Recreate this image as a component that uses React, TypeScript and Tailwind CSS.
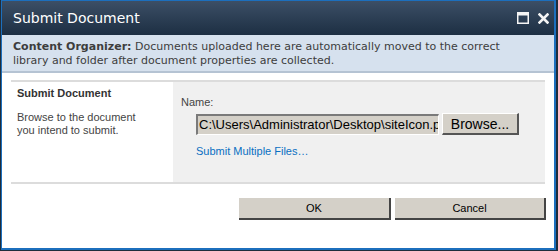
export default function App() {
  const tahoma = { fontFamily: '"Liberation Sans", Arial, sans-serif' }

  return (
    <div className="w-[558px] h-[251px] bg-[#1f2d3b] pl-px pr-[2px] pb-px">
      <div className="flex h-full flex-col border-l border-t border-r-2 border-b-2 border-[#1c6fbd] bg-white">
        {/* title bar */}
        <div className="flex h-[34px] items-center justify-between bg-gradient-to-b from-[#3c4f66] to-[#1d2f43] pl-[11px] pr-[5px]">
          <span className="pt-[1px] text-[14px] text-white" style={{ fontFamily: '"DejaVu Sans", Verdana, sans-serif' }}>
            Submit Document
          </span>
          <div className="flex items-center gap-[9px]">
            <svg width="12" height="12" viewBox="0 0 12 12">
              <rect x="0.75" y="0.75" width="10.5" height="10.5" fill="none" stroke="#f4f4f4" strokeWidth="1.5" />
              <rect x="1" y="1" width="10" height="2.5" fill="#f4f4f4" />
            </svg>
            <svg width="11" height="11" viewBox="0 0 11 11">
              <path d="M1.5 1.5 L9.5 9.5 M9.5 1.5 L1.5 9.5" stroke="#f4f4f4" strokeWidth="2.6" strokeLinecap="square" />
            </svg>
          </div>
        </div>

        {/* info bar */}
        <div
          className="h-[38px] border-b-2 border-[#b5c3d3] bg-[#d6e1ee] px-[11px] pt-[5px] text-[11px] leading-[14px] text-[#3d3d3d]"
          style={{ fontFamily: '"DejaVu Sans", Verdana, sans-serif' }}
        >
          <b>Content Organizer:</b> Documents uploaded here are automatically moved to the correct
          <br />
          library and folder after document properties are collected.
        </div>

        {/* form section */}
        <div className="mx-[9px] mt-[7px] flex h-[104px] border-y-2 border-[#dcdcdc]" style={tahoma}>
          <div className="w-[162px] px-[6px] pt-[3px] text-[11px] text-[#444]">
            <div className="font-bold text-[#333]">Submit Document</div>
            <div className="mt-[9px] leading-[13px]">
              Browse to the document
              <br />
              you intend to submit.
            </div>
          </div>
          <div className="flex-1 bg-[#f0f0f0] pl-[8px] pt-[14px]">
            <div className="text-[11px] leading-[13px] text-[#444]">Name:</div>
            <div className="mt-[4px] flex items-center gap-[3px] pl-[15px]">
              <div className="h-[21px] w-[243px] overflow-hidden whitespace-nowrap border border-t-2 border-l-2 border-t-[#7a7a7a] border-l-[#7a7a7a] border-r-[#ffffff] border-b-[#ffffff] bg-[#d4d0c8] pl-[1px] text-[13px] leading-[17px] text-black">
                C:\Users\Administrator\Desktop\siteIcon.png
              </div>
              <button className="h-[22px] w-[77px] border border-t-white border-l-white border-r-2 border-b-2 border-r-[#555] border-b-[#555] bg-[#d4d0c8] text-[14px] leading-[18px] text-black">
                Browse...
              </button>
            </div>
            <div className="mt-[8px] pl-[15px] text-[11px] text-[#0a6fc2]">Submit Multiple Files…</div>
          </div>
        </div>

        {/* buttons */}
        <div className="mr-[8px] mt-[14px] flex justify-end gap-[4px]" style={tahoma}>
          <button className="h-[22px] w-[152px] border-r-2 border-b-2 border-[#444] bg-[#d4d0c8] text-[11px] text-black">
            OK
          </button>
          <button className="h-[22px] w-[151px] border-r-2 border-b-2 border-[#444] bg-[#d4d0c8] text-[11px] text-black">
            Cancel
          </button>
        </div>
      </div>
    </div>
  )
}
